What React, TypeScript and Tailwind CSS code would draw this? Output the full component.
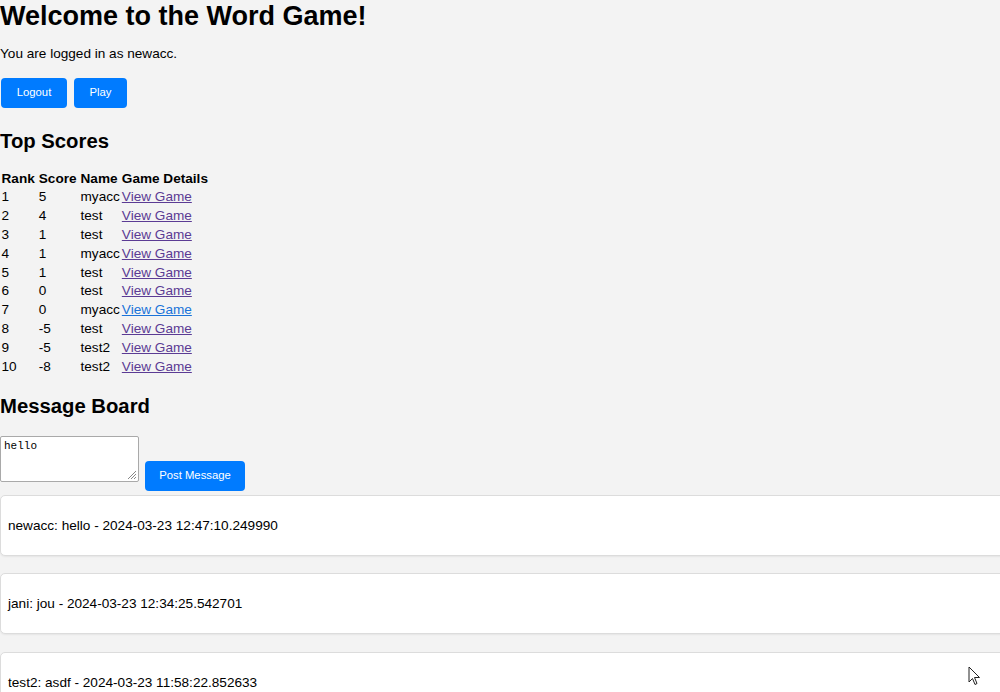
import React from "react";

const scores = [
  [1, 5, "myacc"],
  [2, 4, "test"],
  [3, 1, "test"],
  [4, 1, "myacc"],
  [5, 1, "test"],
  [6, 0, "test"],
  [7, 0, "myacc"],
  [8, -5, "test"],
  [9, -5, "test2"],
  [10, -8, "test2"],
];

const messages = [
  "newacc: hello - 2024-03-23 12:47:10.249990",
  "jani: jou - 2024-03-23 12:34:25.542701",
  "test2: asdf - 2024-03-23 11:58:22.852633",
];

export default function App() {
  return (
    <div
      className="relative w-[1000px] h-[692px] overflow-hidden bg-[#f3f3f3] text-black text-[13.6px] leading-[1.15]"
      style={{ fontFamily: '"Liberation Sans", Arial, sans-serif' }}
    >
      <h1 className="text-[27px] font-bold leading-[31px] mt-[1px]">Welcome to the Word Game!</h1>
      <p className="mt-[14px]">You are logged in as newacc.</p>
      <div className="flex mt-[16px] ml-[1px] gap-[7px]">
        <button className="bg-[#007bff] text-white text-[11.3px] rounded-[4px] w-[66px] h-[30px]">Logout</button>
        <button className="bg-[#007bff] text-white text-[11.3px] rounded-[4px] w-[53px] h-[30px]">Play</button>
      </div>
      <h2 className="text-[20.3px] font-bold leading-[23px] mt-[22px]">Top Scores</h2>
      <table className="mt-[16px] border-separate border-spacing-x-[2.6px] border-spacing-y-[2px] -ml-[0.5px]">
        <thead>
          <tr>
            <th className="font-bold text-left p-0 pr-[2px] leading-[16.8px]">Rank</th>
            <th className="font-bold text-left p-0 pr-[2px] leading-[16.8px]">Score</th>
            <th className="font-bold text-left p-0 leading-[16.8px]">Name</th>
            <th className="font-bold text-left p-0 leading-[16.8px]">Game Details</th>
          </tr>
        </thead>
        <tbody>
          {scores.map(([r, s, n]) => (
            <tr key={r}>
              <td className="p-0 pr-[2px] leading-[16.8px]">{r}</td>
              <td className="p-0 pr-[2px] leading-[16.8px]">{s}</td>
              <td className="p-0 leading-[16.8px]">{n}</td>
              <td className="p-0 leading-[16.8px]">
                <a className={`underline ${r === 7 ? "text-[#1a73d9]" : "text-[#5b3b94]"}`} href="#">View Game</a>
              </td>
            </tr>
          ))}
        </tbody>
      </table>
      <h2 className="text-[20.3px] font-bold leading-[23px] mt-[18px]">Message Board</h2>
      <div className="flex items-start mt-[17.5px] gap-[6px]">
        <div className="relative w-[139px] h-[46px] bg-white border border-[#a9a9a9] rounded-[2px]">
          <span
            className="absolute left-[3px] top-[3px] text-[11px]"
            style={{ fontFamily: '"Liberation Mono", "DejaVu Sans Mono", monospace' }}
          >
            hello
          </span>
          <svg className="absolute right-[1px] bottom-[1px]" width="11" height="11" viewBox="0 0 11 11">
            <path d="M10 2 L2 10 M10 5 L5 10 M10 8 L8 10" stroke="#888" strokeWidth="1" />
          </svg>
        </div>
        <button className="mt-[25px] bg-[#007bff] text-white text-[11.3px] rounded-[4px] w-[100px] h-[30px]">Post Message</button>
      </div>
      <div className="flex flex-col gap-[17.5px] mt-[4px]">
        {messages.map((m) => (
          <div key={m} className="bg-white border border-[#dcdcdc] rounded-[5px] w-[1010px] h-[61px] flex items-center pl-[7px] shadow-[0_1px_2px_rgba(0,0,0,0.06)]">
            {m}
          </div>
        ))}
      </div>
      <svg className="absolute left-[968px] top-[666px]" width="13" height="20" viewBox="0 0 13 20">
        <path d="M1 1 L1 16 L4.5 12.5 L7 18.5 L9 17.5 L6.5 11.5 L11.5 11.5 Z" fill="#fff" stroke="#222" strokeWidth="1" strokeLinejoin="round" />
      </svg>
    </div>
  );
}
